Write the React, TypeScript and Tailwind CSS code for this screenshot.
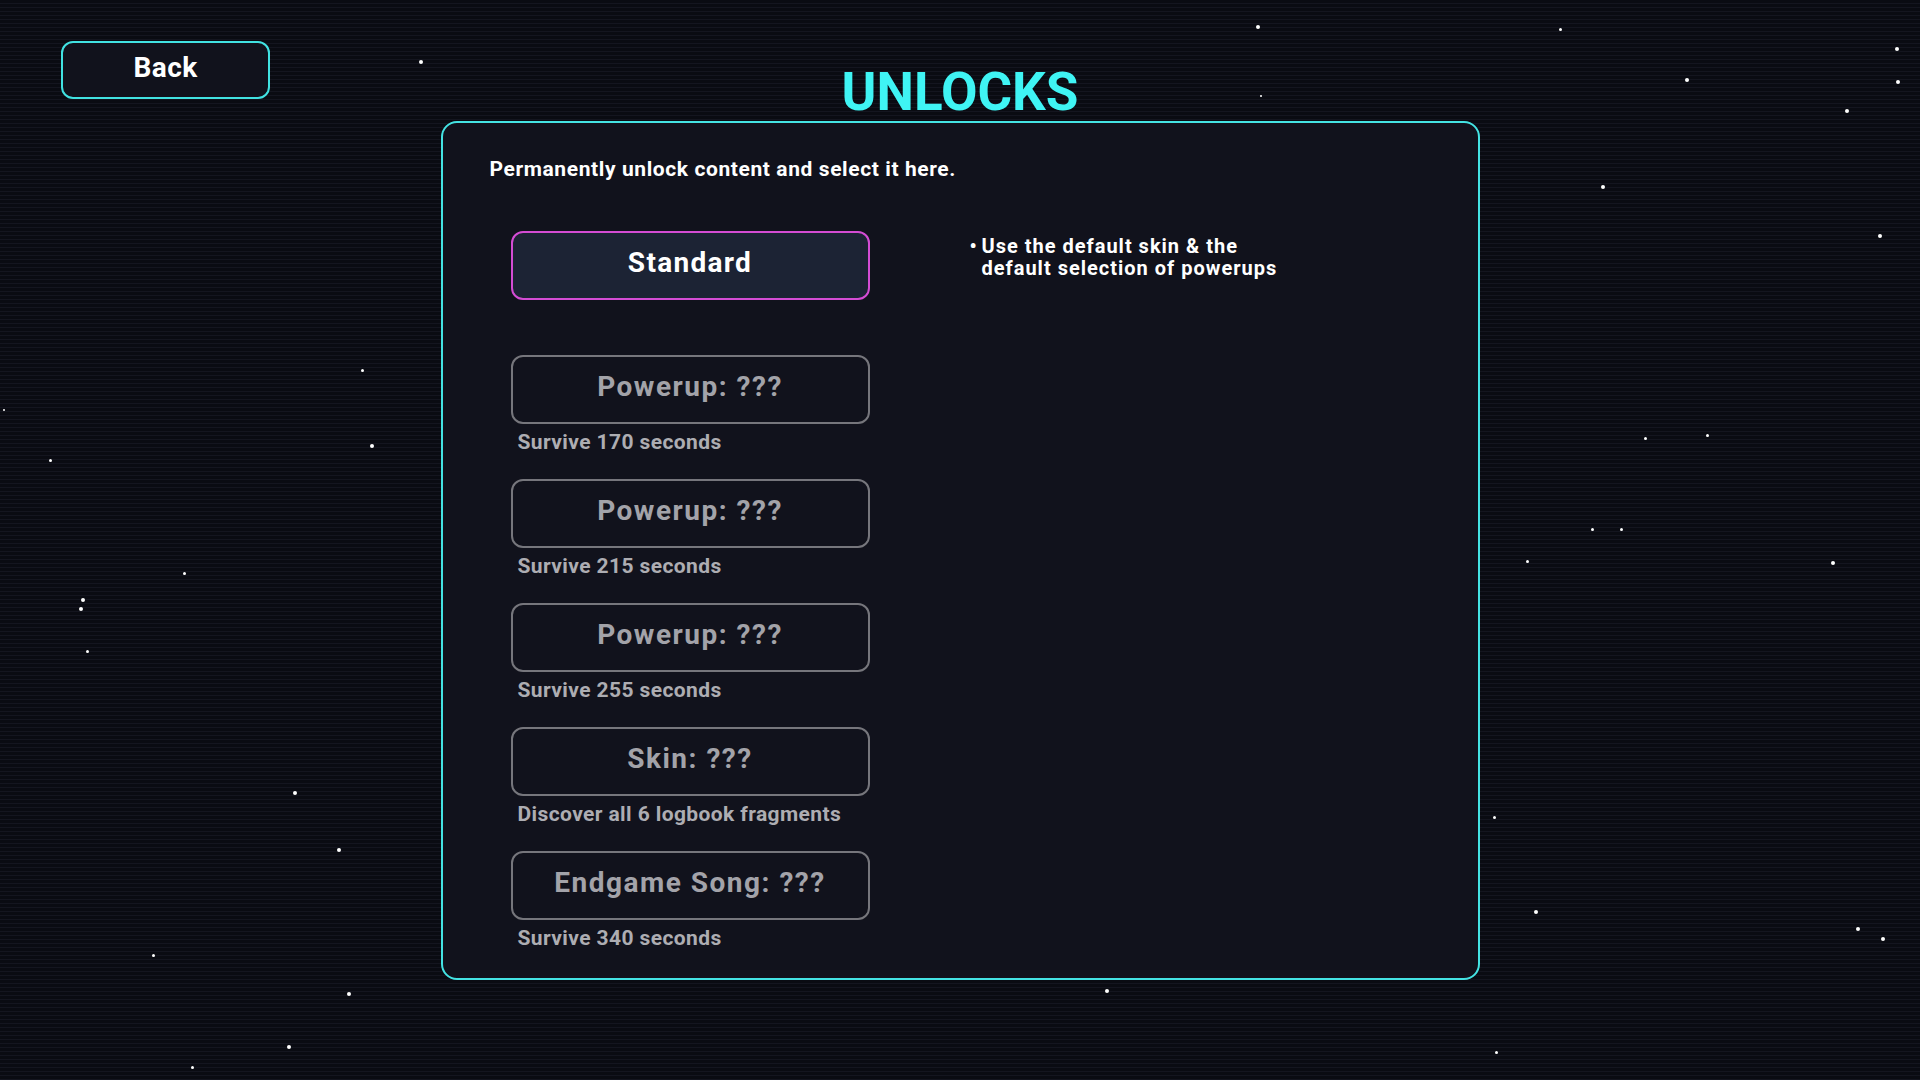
import React from 'react'

interface Unlock {
  label: string
  requirement: string
}

const unlocks: Unlock[] = [
  { label: 'Powerup: ???', requirement: 'Survive 170 seconds' },
  { label: 'Powerup: ???', requirement: 'Survive 215 seconds' },
  { label: 'Powerup: ???', requirement: 'Survive 255 seconds' },
  { label: 'Skin: ???', requirement: 'Discover all 6 logbook fragments' },
  { label: 'Endgame Song: ???', requirement: 'Survive 340 seconds' },
]

// starfield: [x, y, size]
const stars: [number, number, number][] = [
  [421, 62, 4], [1258, 27, 4], [1261, 96, 2], [1560, 29, 3], [1687, 80, 4],
  [1847, 111, 4], [1897, 49, 4], [1898, 82, 4], [1603, 187, 4], [1880, 236, 4],
  [362, 370, 3], [4, 410, 2], [372, 446, 4], [50, 460, 3], [1645, 438, 3],
  [1707, 435, 3], [184, 573, 3], [83, 600, 4], [81, 609, 4], [1592, 529, 3],
  [1621, 529, 3], [1527, 561, 3], [1833, 563, 4], [87, 651, 3], [295, 793, 4],
  [339, 850, 4], [1494, 817, 3], [153, 955, 3], [349, 994, 4], [1536, 912, 4],
  [1858, 929, 4], [1883, 939, 4], [1107, 991, 4], [289, 1047, 4], [192, 1067, 3],
  [1496, 1052, 3],
]

function Star({ x, y, size }: { x: number; y: number; size: number }) {
  return (
    <div
      className="absolute rounded-full bg-white"
      style={{ left: x - size / 2, top: y - size / 2, width: size, height: size }}
    />
  )
}

function LockedItem({ item }: { item: Unlock }) {
  return (
    <div className="flex flex-col">
      <button className="h-[69px] w-[359px] rounded-[12px] border-2 border-[#76767c] bg-[#11121c] pb-[5px] text-[28px] font-bold tracking-[1.5px] text-[#a3a3a9]">
        {item.label}
      </button>
      <div className="mt-[6px] h-[24px] pl-[7px] text-[21px] leading-[24px] font-bold tracking-[0.4px] text-[#adadb2]">
        {item.requirement}
      </div>
    </div>
  )
}

export default function App() {
  return (
    <div
      className="relative h-screen w-full overflow-hidden bg-[#0a0b12] bg-[image:repeating-linear-gradient(180deg,#0a0b12_0px,#0a0b12_3px,#14151f_3px,#14151f_4px)]"
      style={{ fontFamily: 'Roboto, "Liberation Sans", sans-serif' }}
    >
      {stars.map(([x, y, s], i) => (
        <Star key={i} x={x} y={y} size={s} />
      ))}

      <div className="relative">
        <div className="grid h-[121px] grid-cols-[1fr_auto_1fr]">
          <div className="pt-[41px] pl-[61px]">
            <button className="h-[58px] w-[209px] rounded-[12px] border-2 border-[#41e2e2] bg-[#11121c] pb-[5px] text-[28px] font-bold tracking-[0.4px] text-white">
              Back
            </button>
          </div>
          <h1 className="pt-[66px] text-[53px] leading-none font-bold text-[#3ff4f4]">UNLOCKS</h1>
          <div />
        </div>

        <div className="mx-auto h-[859px] w-[1039px] rounded-[16px] border-2 border-[#44e3e3] bg-[#11121c] pt-[34px]">
          <p className="pl-[47px] text-[21px] leading-[24px] font-bold tracking-[0.6px] text-white">
            Permanently unlock content and select it here.
          </p>

          <div className="mt-[50px] flex pl-[68px]">
            <div className="flex flex-col">
              <button className="h-[69px] w-[359px] rounded-[12px] border-2 border-[#d44cd4] bg-[#1c2334] pb-[5px] text-[28px] font-bold tracking-[1.3px] text-white">
                Standard
              </button>
              <div className="mt-[55px] flex flex-col gap-[25px]">
                {unlocks.map((item, i) => (
                  <LockedItem key={i} item={item} />
                ))}
              </div>
            </div>

            <div className="ml-[100px] mt-[4px] flex text-[20px] leading-[22px] font-bold tracking-[1px] text-white">
              <span className="w-[12px]">•</span>
              <span>
                Use the default skin &amp; the
                <br />
                default selection of powerups
              </span>
            </div>
          </div>
        </div>
      </div>
    </div>
  )
}
